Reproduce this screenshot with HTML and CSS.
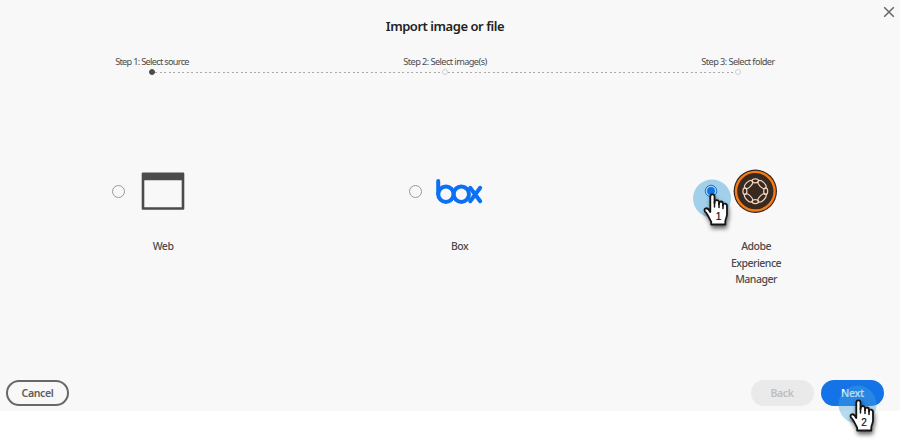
FILE: index.html
```html
<!DOCTYPE html>
<html lang="en">
<head>
<meta charset="utf-8">
<title>Import image or file</title>
<link rel="stylesheet" href="styles.css">
</head>
<body>
<main class="dialog">
  <button class="close" aria-label="Close"><svg width="12" height="12" viewBox="0 0 12 12"><path d="M1.2 1.2 10.8 10.8M10.8 1.2 1.2 10.8"/></svg></button>
  <h1 class="title">Import image or file</h1>
  <ol class="steps">
    <li class="step active"><span class="step-label first-label">Step 1: Select source</span><div class="rail"><i class="line blank"></i><i class="dot"></i><i class="line"></i></div></li>
    <li class="step"><span class="step-label">Step 2: Select image(s)</span><div class="rail"><i class="line"></i><i class="dot"></i><i class="line"></i></div></li>
    <li class="step"><span class="step-label">Step 3: Select folder</span><div class="rail"><i class="line"></i><i class="dot"></i><i class="line blank"></i></div></li>
  </ol>
  <div class="sources">
    <label class="source">
      <span class="radio"></span>
      <svg class="icon" viewBox="0 0 44 44"><path fill="#4b4b4b" fill-rule="evenodd" d="M1.8 3.6H42.2Q43.3 3.6 43.3 4.7V39.7Q43.3 40.8 42.2 40.8H1.8Q.7 40.8.7 39.7V4.7Q.7 3.6 1.8 3.6ZM3.3 11.2V38.2H40.7V11.2Z"/></svg>
      <span class="name">Web</span>
    </label>
    <label class="source">
      <span class="radio"></span>
      <svg class="icon wide" viewBox="0 0 48 44"><g fill="none" stroke="#0b71f4" stroke-width="4" stroke-linecap="round"><path d="M2.2 12V25"/><circle cx="9.9" cy="25.2" r="7.7"/><circle cx="25.3" cy="25.2" r="7.7"/><path d="M34.2 18.8 44.2 32.2M44.2 18.8 34.2 32.2"/></g></svg>
      <span class="name">Box</span>
    </label>
    <label class="source">
      <span class="radio checked"><svg class="pointer" width="50" height="56" viewBox="0 0 50 56"><circle class="halo" cx="20" cy="21.5" r="19"/><circle cx="19" cy="14" r="5.8" fill="none" stroke="#1677dd"/><circle cx="19" cy="14" r="3.9" fill="#1473e6"/><path class="hand" d="M18.3 31V19.4C18.3 16.6 22.5 16.6 22.5 19.4V26.2C22.5 21.9 27 22.3 27 25.5V27.2C27 23.5 31 23.8 31 27V28.5C31 25.5 35 26.2 35 29V37.2C35 40.6 33.3 42.1 33.3 44.5V47.5H19.2V44.8C17 41 15.5 36.4 12.9 34.5C11.2 31.1 15.3 29.2 18.3 35Z"/><path class="crease" d="M22.5 25V30M27 26V30.5M31 28V31.5"/><text class="digit" x="26.5" y="43.2">1</text></svg></span>
      <svg class="icon" viewBox="0 0 44 44"><circle cx="21.3" cy="22.2" r="21.7" fill="#34251c"/><circle cx="21.3" cy="22.2" r="19.3" fill="#392a20" stroke="#f47b16" stroke-width="2.4"/>
        <g fill="none" stroke="#f0d3c0" stroke-width="1.2"><ellipse cx="21.3" cy="11.8" rx="3.3" ry="2"/><ellipse cx="21.3" cy="32.6" rx="3.3" ry="2"/><ellipse cx="10.9" cy="22.2" rx="2" ry="3.3"/><ellipse cx="31.7" cy="22.2" rx="2" ry="3.3"/><ellipse cx="14.6" cy="15.5" rx="5.1" ry="2.6" transform="rotate(-45 14.6 15.5)"/><ellipse cx="28" cy="15.5" rx="5.1" ry="2.6" transform="rotate(45 28 15.5)"/><ellipse cx="14.6" cy="28.9" rx="5.1" ry="2.6" transform="rotate(45 14.6 28.9)"/><ellipse cx="28" cy="28.9" rx="5.1" ry="2.6" transform="rotate(-45 28 28.9)"/></g></svg>
      <span class="name">Adobe<br>Experience<br>Manager</span>
    </label>
  </div>
  <footer class="actions">
    <button class="btn cancel"><span>Cancel</span></button>
    <button class="btn back" disabled><span>Back</span></button>
    <button class="btn next"><span>Next</span><svg class="pointer" width="50" height="56" viewBox="0 0 50 56"><circle class="halo" cx="19.5" cy="21.5" r="19"/><path class="hand" d="M18.3 31V19.4C18.3 16.6 22.5 16.6 22.5 19.4V26.2C22.5 21.9 27 22.3 27 25.5V27.2C27 23.5 31 23.8 31 27V28.5C31 25.5 35 26.2 35 29V37.2C35 40.6 33.3 42.1 33.3 44.5V47.5H19.2V44.8C17 41 15.5 36.4 12.9 34.5C11.2 31.1 15.3 29.2 18.3 35Z"/><path class="crease" d="M22.5 25V30M27 26V30.5M31 28V31.5"/><text class="digit" x="26" y="43.2">2</text></svg></button>
  </footer>
</main>
</body>
</html>
```
FILE: styles.css
```css
* { box-sizing: border-box; }
body { margin: 0; height: 440px; background: #fff; color: #4b4b4b; font-family: "Noto Sans", "Open Sans", sans-serif; }
button { font: inherit; padding: 0; border: 0; background: none; }
.dialog { width: 900px; height: 411px; background: #f8f8f8; display: flex; flex-direction: column; position: relative; }
.close { position: absolute; left: 883px; top: 6px; width: 12px; height: 12px; }
.close svg { display: block; fill: none; stroke: #666; stroke-width: 1.5; }
.title { margin: 16px 0 0; width: 890px; height: 20px; text-align: center; font-size: 13px; line-height: 20px; font-weight: 600; color: #222; letter-spacing: -.45px; }
.steps { list-style: none; margin: 20px 0 0 5.5px; padding: 0; display: grid; grid-template-columns: repeat(3, 293px); }
.step { display: flex; flex-direction: column; align-items: center; }
.step-label { font-size: 9.2px; line-height: 12px; height: 12px; letter-spacing: -.57px; white-space: nowrap; }
.first-label { letter-spacing: -.7px; }
.rail { width: 100%; height: 8px; display: flex; align-items: center; }
.line { flex: 1; height: 1px; background: repeating-linear-gradient(90deg, #aaa 0 2px, transparent 2px 4.5px); }
.blank { visibility: hidden; }
.dot { width: 6px; height: 6px; border-radius: 50%; border: 1px solid #d0d0d0; background: #fafafa; }
.active .dot { background: #4b4b4b; border-color: #4b4b4b; }
.sources { margin: 93px 0 0 14.8px; display: grid; grid-template-columns: repeat(3, 296.5px); }
.source { display: grid; grid-template-columns: 14px 48px 14px; column-gap: 13px; justify-content: center; align-items: center; align-content: start; }
.radio { width: 13px; height: 13px; border: 1px solid #999; border-radius: 50%; position: relative; }
.radio.checked { border-color: transparent; z-index: 2; }
.icon { width: 44px; height: 44px; justify-self: center; overflow: visible; }
.icon.wide { width: 48px; }
.name { grid-column: 1 / -1; margin-top: 25px; text-align: center; font-size: 10.5px; line-height: 16.5px; font-weight: 500; letter-spacing: -.5px; }
.actions { margin: auto 16px 5px 6px; display: flex; align-items: center; }
.btn { width: 63px; height: 26px; border-radius: 13px; font-size: 10.5px; font-weight: 600; line-height: 24px; letter-spacing: -.35px; position: relative; }
.cancel { border: 2px solid #686868; color: #5c5c5c; margin-right: auto; line-height: 22px; }
.back { background: #eaeaea; color: #bebebe; margin-right: 7.5px; }
.next { background: #1473e6; color: #fff; }
.pointer { position: absolute; left: -14px; top: -9px; overflow: visible; }
.next .pointer { left: 16.5px; top: 3px; }
.halo { fill: #45a6dc; fill-opacity: .48; }
.next .halo { fill-opacity: .4; }
.hand { fill: #fff; stroke: #151515; stroke-width: 1.8; stroke-linejoin: round; filter: drop-shadow(1px 3px 2px rgba(0, 0, 0, .6)); }
.crease { fill: none; stroke: #151515; stroke-width: 1.5; stroke-linecap: round; }
.digit { font: 10px "Liberation Sans", Arial, sans-serif; fill: #111; stroke: #111; stroke-width: .2; text-anchor: middle; letter-spacing: 0; }
```
